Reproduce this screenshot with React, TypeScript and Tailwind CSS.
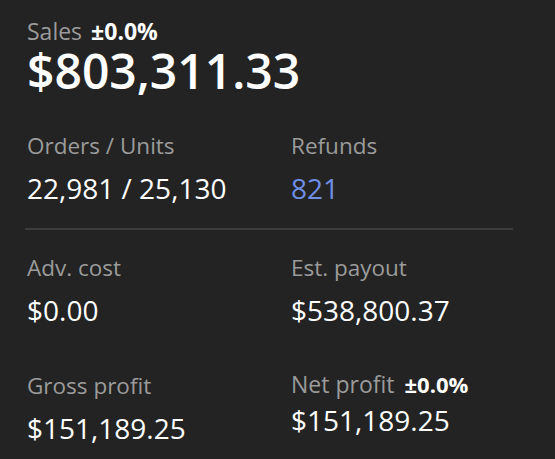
export default function App() {
  return (
    <main
      className="h-[459px] w-[555px] overflow-hidden bg-[#232323] pl-[27px] pr-[42px] pt-[19px] text-white"
      style={{ fontFamily: '"Open Sans", sans-serif' }}
    >
      <div>
        <div className="flex items-baseline gap-[9px] text-[23px] leading-[24px]">
          <span className="text-[#9b9b9b]">Sales</span>
          <span className="text-[23px] font-bold">±0.0%</span>
        </div>
        <div className="text-[48px] font-semibold leading-[56px]">$803,311.33</div>
      </div>

      <div className="mt-[32px] grid grid-cols-[264px_1fr] pb-[22px]">
        <Metric label="Orders / Units" value="22,981 / 25,130" />
        <Metric label="Refunds" value="821" valueClass="text-[#6f8fe6]" />
      </div>

      <div className="-ml-[2px] h-[2px] bg-[#3c3c3c]" />

      <div className="mt-[23px] grid grid-cols-[264px_1fr] gap-y-[43px]">
        <Metric label="Adv. cost" value="$0.00" />
        <Metric label="Est. payout" value="$538,800.37" />
        <Metric label="Gross profit" value="$151,189.25" />
        <div className="-mt-[2px]">
          <div className="flex items-baseline gap-[10px] text-[23px] leading-[30px]">
            <span className="text-[#9b9b9b]">Net profit</span>
            <span className="text-[22px] font-bold">±0.0%</span>
          </div>
          <div className="mt-[3px] text-[28px] leading-[36px]">$151,189.25</div>
        </div>
      </div>
    </main>
  );
}

function Metric({ label, value, valueClass = "text-white" }: { label: string; value: string; valueClass?: string }) {
  return (
    <div>
      <div className="text-[22.5px] leading-[30px] text-[#9b9b9b]">{label}</div>
      <div className={`mt-[9px] text-[28px] leading-[36px] ${valueClass}`}>{value}</div>
    </div>
  );
}
